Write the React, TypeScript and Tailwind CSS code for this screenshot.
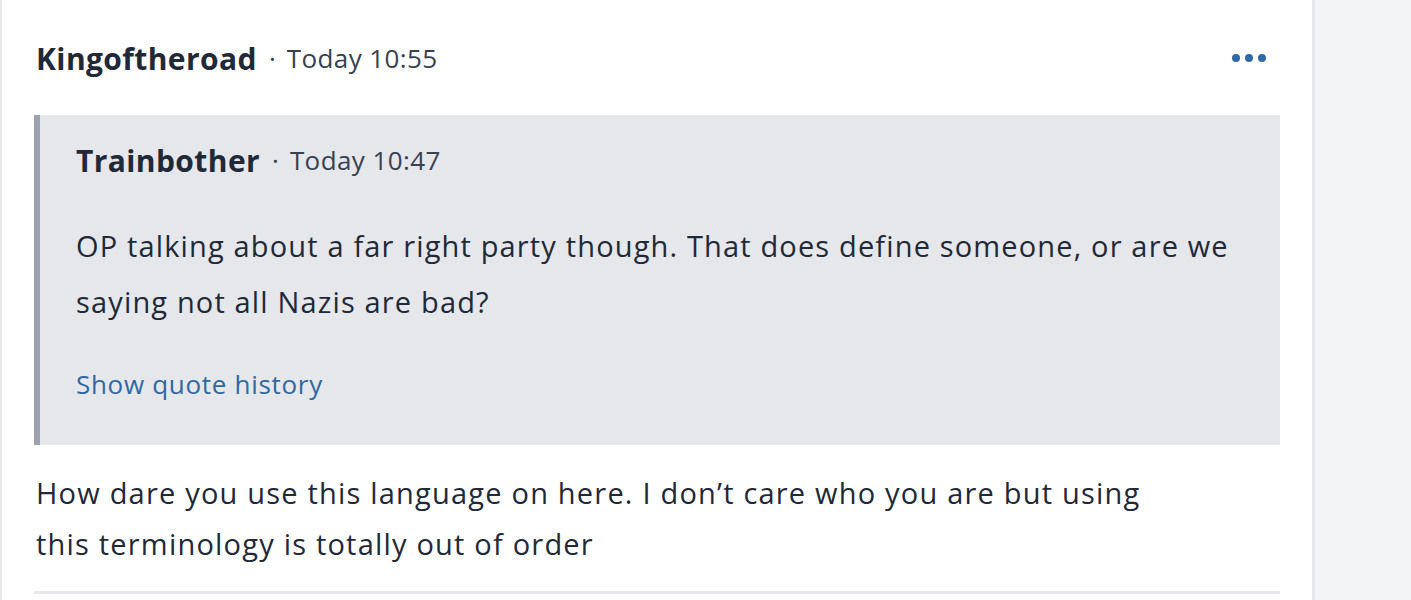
import React from 'react';

const font = { fontFamily: '"Open Sans", "Noto Sans", sans-serif' };

const Meta: React.FC<{ name: string; time: string }> = ({ name, time }) => (
  <div className="flex items-center whitespace-nowrap text-[#1f2937]">
    <span className="text-[30px] font-bold tracking-[0.4px]">{name}</span>
    <span className="ml-[12px] mr-[11px] text-[26px] text-[#374151]">·</span>
    <span className="text-[26px] text-[#374151] tracking-[0.4px]">{time}</span>
  </div>
);

export default function App() {
  return (
    <div className="flex h-[600px] w-full bg-[#f3f4f6] overflow-hidden" style={font}>
      <div className="w-[1315px] shrink-0 bg-white border-l-2 border-r-[3px] border-[#e7e8ec] pl-[32px] pr-[32px]">
        {/* post header */}
        <div className="flex items-center justify-between h-[56px] mt-[30px] pl-[2px]">
          <Meta name="Kingoftheroad" time="Today 10:55" />
          <button className="flex items-center gap-[5px] mr-[14px]" aria-label="More">
            <span className="w-[8px] h-[8px] rounded-full bg-[#2d6aa6]" />
            <span className="w-[8px] h-[8px] rounded-full bg-[#2d6aa6]" />
            <span className="w-[8px] h-[8px] rounded-full bg-[#2d6aa6]" />
          </button>
        </div>

        {/* quote */}
        <div className="mt-[29px] h-[330px] bg-[#e5e7eb] border-l-[6px] border-[#9ca3af] pl-[36px] pt-[17px]">
          <div className="h-[56px] flex items-center">
            <Meta name="Trainbother" time="Today 10:47" />
          </div>
          <p className="mt-[30px] text-[29px] leading-[56px] text-[#1f2937] whitespace-nowrap tracking-[1.15px]">
            OP talking about a far right party though. That does define someone, or are we
            <br />
            saying not all Nazis are bad?
          </p>
          <div className="mt-[26px] h-[56px] flex items-center">
            <a className="text-[26px] text-[#2f68a3] tracking-[0.7px]">Show quote history</a>
          </div>
        </div>

        {/* message */}
        <p className="mt-[22px] pl-[2px] text-[29px] leading-[51px] text-[#1f2937] whitespace-nowrap tracking-[1.2px]">
          How dare you use this language on here. I don’t care who you are but using
          <br />
          this terminology is totally out of order
        </p>
        <div className="mt-[22px] h-[3px] bg-[#e5e7eb]" />
      </div>
      <div className="flex-1" />
    </div>
  );
}
